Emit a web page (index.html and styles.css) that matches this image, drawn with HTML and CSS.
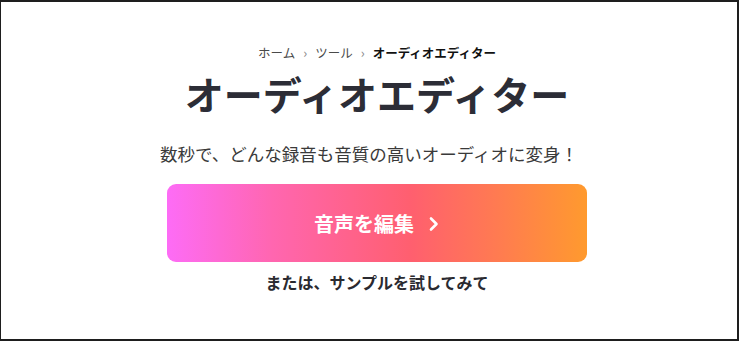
FILE: index.html
```html
<!DOCTYPE html>
<html>
	<head>
		<meta charset="UTF-8">
		<title>オーディオエディター</title>
		<link rel="stylesheet" href="styles.css">
	</head>
	<body>
		<div class="frame">
			<div class="hero">
				<nav class="crumbs">
					<a href="#">ホーム</a>
					<span class="sep">›</span>
					<a href="#">ツール</a>
					<span class="sep">›</span>
					<span class="current">オーディオエディター</span>
				</nav>
				<h1 class="title">オーディオエディター</h1>
				<p class="lead">数秒で、どんな録音も音質の高いオーディオに変身！</p>
				<a class="cta" href="#">
					<span>音声を編集</span>
					<svg width="12" height="16" viewBox="0 0 12 16"><path d="M3 2.5 L8.5 8 L3 13.5" fill="none" stroke="#fff" stroke-width="2.6" stroke-linecap="round" stroke-linejoin="round"/></svg>
				</a>
				<a class="sample" href="#">または、サンプルを試してみて</a>
			</div>
		</div>
	</body>
</html>
```

FILE: styles.css
```css
html,body{
	margin: 0;
	padding: 0;
	background: #fff;
}
body{
	font-family: "Noto Sans CJK JP", "Noto Sans", sans-serif;
	color: #2b2b33;
}
.frame{
	box-sizing: border-box;
	width: 739px;
	height: 341px;
	border-style: solid;
	border-color: #1e1e1e;
	border-width: 2px 2px 2px 1px;
}
.hero{
	display: flex;
	flex-direction: column;
	align-items: center;
	padding-top: 42px;
	padding-left: 16px;
}
.crumbs{
	display: flex;
	align-items: center;
	gap: 8px;
	font-size: 12.5px;
	line-height: 18px;
	color: #555;
}
.crumbs a{
	color: #4a4a4a;
	text-decoration: none;
}
.crumbs .sep{
	color: #888;
	font-size: 13px;
}
.crumbs .current{
	color: #111;
	font-weight: bold;
}
.title{
	margin: 3px 0 0;
	font-size: 39px;
	line-height: 56px;
	font-weight: bold;
	color: #2c2d36;
	letter-spacing: 0;
}
.lead{
	margin: 20px 16px 0 0;
	font-size: 17.5px;
	line-height: 26px;
	color: #3a3a3a;
}
.cta{
	margin-top: 17px;
	width: 420px;
	height: 78px;
	border-radius: 9px;
	background: linear-gradient(90deg, #fd6cf6 0%, #ff66b0 25%, #ff5f6f 58%, #ff7a52 78%, #ff9a2e 100%);
	display: flex;
	align-items: center;
	justify-content: center;
	gap: 14px;
	color: #fff;
	font-size: 20px;
	font-weight: bold;
	text-decoration: none;
}
.cta svg{
	margin-top: 2px;
}
.sample{
	margin-top: 8px;
	font-size: 16px;
	line-height: 24px;
	font-weight: bold;
	color: #2a2a30;
	text-decoration: none;
}
```
